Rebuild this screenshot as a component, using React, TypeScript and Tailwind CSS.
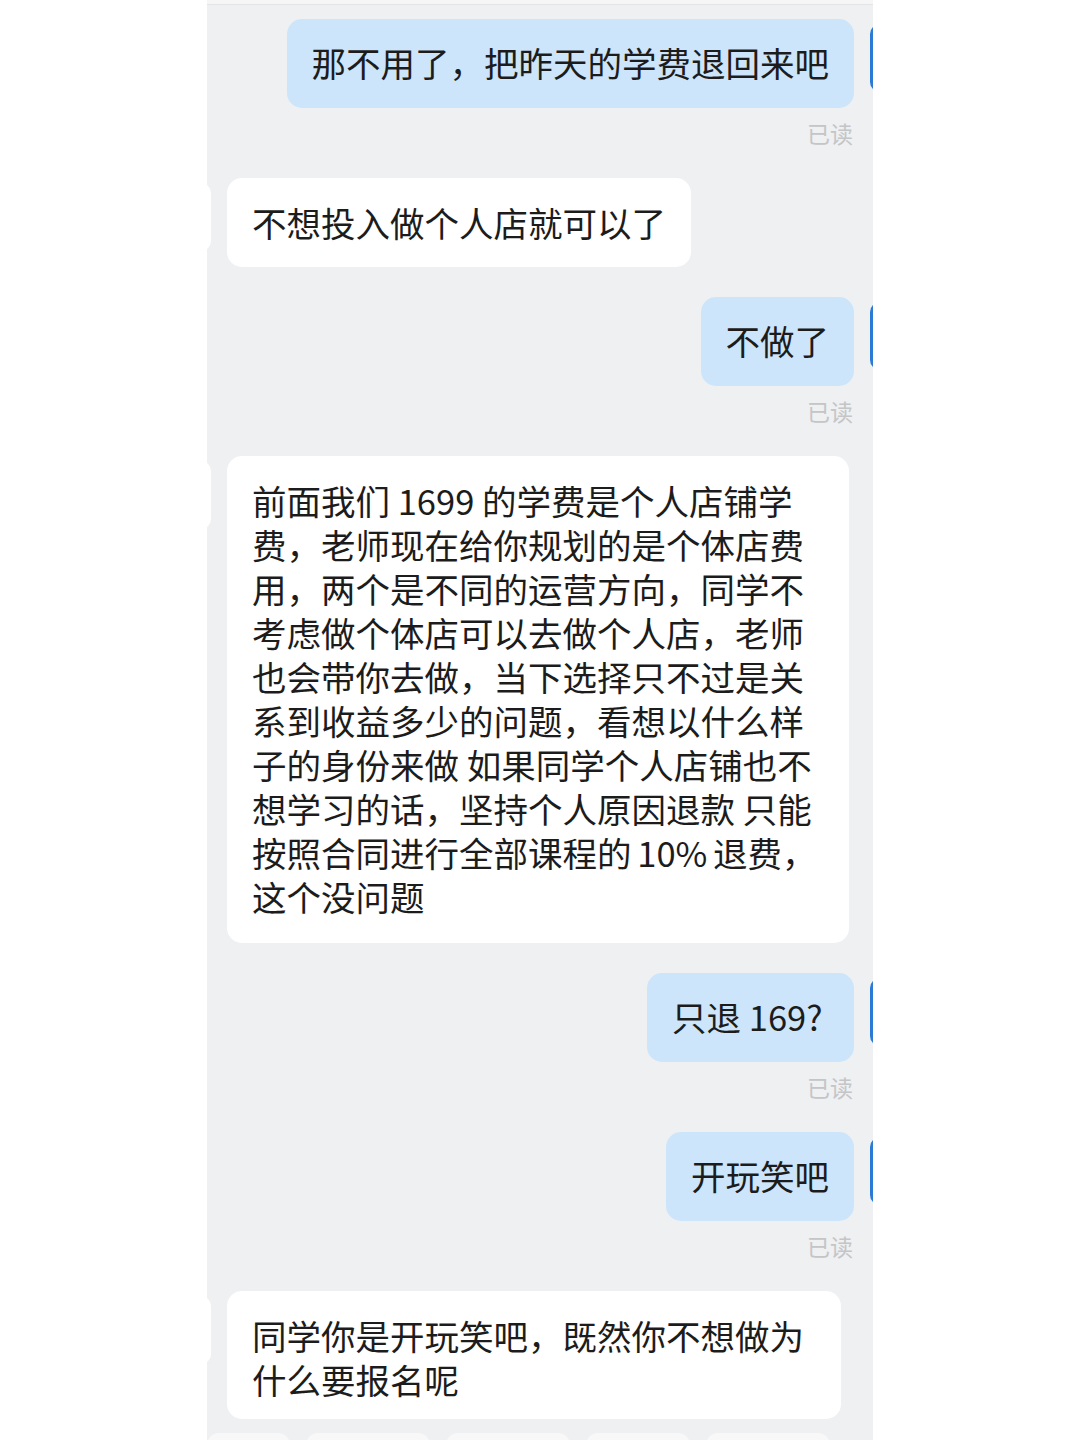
import React from "react";

type Msg =
  | { side: "left"; lines: string[]; width?: number; pb?: number }
  | { side: "right"; lines: string[]; width?: number };

const FONT = '"Noto Sans CJK SC", "Noto Sans", sans-serif';

const messages: Msg[] = [
  { side: "right", lines: ["那不用了，把昨天的学费退回来吧"] },
  { side: "left", lines: ["不想投入做个人店就可以了"] },
  { side: "right", lines: ["不做了"] },
  {
    side: "left",
    width: 622,
    pb: 25,
    lines: [
      "前面我们 1699 的学费是个人店铺学",
      "费，老师现在给你规划的是个体店费",
      "用，两个是不同的运营方向，同学不",
      "考虑做个体店可以去做个人店，老师",
      "也会带你去做，当下选择只不过是关",
      "系到收益多少的问题，看想以什么样",
      "子的身份来做 如果同学个人店铺也不",
      "想学习的话，坚持个人原因退款 只能",
      "按照合同进行全部课程的\u200610%\u2006退费，",
      "这个没问题",
    ],
  },
  { side: "right", width: 207, lines: ["只退 169?"] },
  { side: "right", lines: ["开玩笑吧"] },
  {
    side: "left",
    width: 614,
    pb: 18,
    lines: ["同学你是开玩笑吧，既然你不想做为", "什么要报名呢"],
  },
];

function Lines({ lines }: { lines: string[] }) {
  return (
    <>
      {lines.map((l, i) => (
        <div key={i} className="whitespace-pre">
          {l}
        </div>
      ))}
    </>
  );
}

function LeftRow({ m }: { m: Extract<Msg, { side: "left" }> }) {
  const pb = m.pb === 18 ? "pb-[18px]" : m.pb === 25 ? "pb-[25px]" : "pb-[23px]";
  const w = m.width === 622 ? "w-[622px]" : m.width === 614 ? "w-[614px]" : "";
  return (
    <div className="flex items-start gap-[16px] mt-[30px]">
      <div className="w-[68px] h-[68px] mt-[5px] shrink-0 rounded-[10px] bg-white" />
      <div className={`bg-white rounded-[15px] px-[25px] pt-[22px] ${pb} ${w}`}>
        <Lines lines={m.lines} />
      </div>
    </div>
  );
}

function RightRow({ m, first }: { m: Extract<Msg, { side: "right" }>; first: boolean }) {
  const w = m.width === 207 ? "w-[207px]" : "";
  return (
    <div className={`flex justify-end items-start gap-[16px] ${first ? "mt-[14px]" : "mt-[30px]"}`}>
      <div className="flex flex-col items-end">
        <div className={`bg-[#cde5fb] rounded-[15px] px-[25px] pt-[21px] pb-[24px] ${w}`}>
          <Lines lines={m.lines} />
        </div>
        <div className="mt-[10px] h-[30px] leading-[30px] text-[23px] text-[#c4c5c7] pr-[1px]">
          已读
        </div>
      </div>
      <div className="w-[68px] h-[68px] mt-[5px] shrink-0 rounded-[10px] bg-[#2b7bd6]" />
    </div>
  );
}

export default function App() {
  return (
    <div className="w-full min-h-[1440px] bg-white" style={{ fontFamily: FONT }}>
      <div className="mx-auto w-[666px] h-[1440px] overflow-hidden bg-[#eff0f2] flex flex-col">
        {/* status strip */}
        <div className="h-[5px] shrink-0 bg-[#f6f6f7] border-b border-[#e3e4e6]" />

        {/* conversation */}
        <div className="ml-[-64px] w-[795px] shrink-0 text-[34.5px] leading-[44px] text-[#1c1c1c]">
          {messages.map((m, i) =>
            m.side === "left" ? (
              <LeftRow key={i} m={m} />
            ) : (
              <RightRow key={i} m={m} first={i === 0} />
            )
          )}
        </div>

        {/* quick reply chips */}
        <div className="mt-[14px] flex gap-[16px] shrink-0">
          <div className="w-[83px] h-[40px] rounded-t-[12px] bg-[#f8f8f9]" />
          <div className="w-[124px] h-[40px] rounded-t-[12px] bg-[#f8f8f9]" />
          <div className="w-[124px] h-[40px] rounded-t-[12px] bg-[#f8f8f9]" />
          <div className="w-[104px] h-[40px] rounded-t-[12px] bg-[#f8f8f9]" />
          <div className="w-[124px] h-[40px] rounded-t-[12px] bg-[#f8f8f9]" />
        </div>
      </div>
    </div>
  );
}
